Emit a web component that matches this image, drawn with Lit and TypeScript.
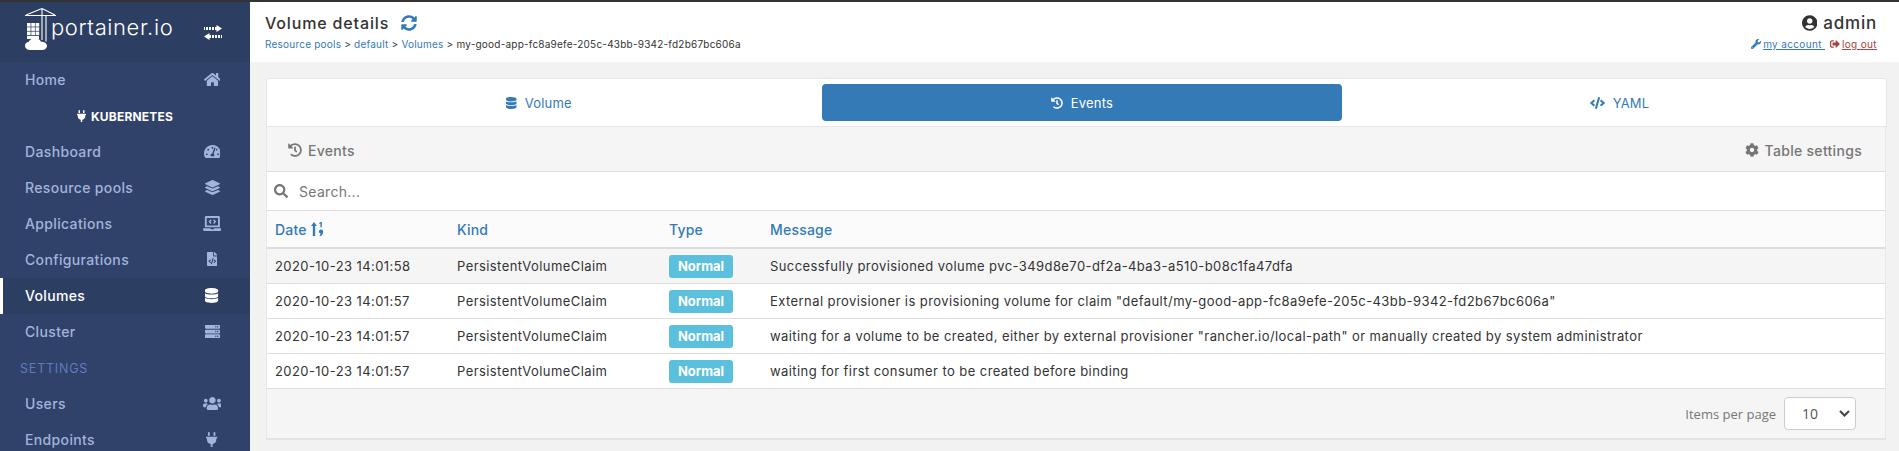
import {LitElement, css, html, svg} from 'lit';
import {customElement} from 'lit/decorators.js';

// font awesome solid glyphs: [viewBox width, path]
const ICONS: Record<string, [number, string]> = {
  home: [576, 'M280.37 148.26L96 300.11V464a16 16 0 0 0 16 16l112.06-.29a16 16 0 0 0 15.92-16V368a16 16 0 0 1 16-16h64a16 16 0 0 1 16 16v95.64a16 16 0 0 0 16 16.05L464 480a16 16 0 0 0 16-16V300L295.67 148.26a12.19 12.19 0 0 0-15.3 0zM571.6 251.47L488 182.56V44.05a12 12 0 0 0-12-12h-56a12 12 0 0 0-12 12v72.61L318.47 43a48 48 0 0 0-61 0L4.34 251.47a12 12 0 0 0-1.6 16.9l25.5 31A12 12 0 0 0 45.15 301l235.22-193.74a12.19 12.19 0 0 1 15.3 0L530.9 301a12 12 0 0 0 16.9-1.6l25.5-31a12 12 0 0 0-1.7-16.93z'],
  database: [448, 'M448 73.143v45.714C448 159.143 347.667 192 224 192S0 159.143 0 118.857V73.143C0 32.857 100.333 0 224 0s224 32.857 224 73.143zM448 176v102.857C448 319.143 347.667 352 224 352S0 319.143 0 278.857V176c48.125 33.143 136.208 48.572 224 48.572S399.874 209.143 448 176zm0 160v102.857C448 479.143 347.667 512 224 512S0 479.143 0 438.857V336c48.125 33.143 136.208 48.572 224 48.572S399.874 369.143 448 336z'],
  code: [640, 'M278.9 511.5l-61-17.7c-6.4-1.8-10-8.5-8.2-14.9L346.2 8.7c1.8-6.4 8.5-10.1 14.9-8.2l61 17.7c6.4 1.8 10 8.5 8.2 14.9L293.8 503.3c-1.9 6.4-8.5 10.1-14.9 8.2zm-114-112.2l43.5-46.4c4.6-4.9 4.3-12.7-.8-17.2L117 256l90.6-79.7c5.1-4.5 5.5-12.3.8-17.2l-43.5-46.4c-4.5-4.8-12.1-5.1-17-.5L3.8 247.2c-5.1 4.7-5.1 12.8 0 17.5l144.1 135.1c4.9 4.6 12.5 4.4 17-.5zm327.2.6l144.1-135.1c5.1-4.7 5.1-12.8 0-17.5L492.1 112.1c-4.8-4.5-12.4-4.3-17 .5L431.6 159c-4.6 4.9-4.3 12.7.8 17.2L523 256l-90.6 79.7c-5.1 4.5-5.5 12.3-.8 17.2l43.5 46.4c4.5 4.9 12.1 5.1 17 .6z'],
  search: [512, 'M505 442.7L405.3 343c-4.5-4.5-10.6-7-17-7H372c27.6-35.3 44-79.7 44-128C416 93.1 322.9 0 208 0S0 93.1 0 208s93.1 208 208 208c48.3 0 92.7-16.4 128-44v16.3c0 6.4 2.5 12.5 7 17l99.7 99.7c9.4 9.4 24.6 9.4 33.9 0l28.3-28.3c9.4-9.4 9.4-24.6.1-34zM208 336c-70.7 0-128-57.2-128-128 0-70.7 57.2-128 128-128 70.7 0 128 57.2 128 128 0 70.7-57.2 128-128 128z'],
  cog: [512, 'M487.4 315.7l-42.6-24.6c4.3-23.2 4.3-47 0-70.2l42.6-24.6c4.9-2.8 7.1-8.6 5.5-14-11.1-35.6-30-67.8-54.7-94.6-3.8-4.1-10-5.1-14.8-2.3L380.8 110c-17.9-15.4-38.5-27.3-60.8-35.1V25.8c0-5.6-3.9-10.5-9.4-11.7-36.7-8.2-74.3-7.8-109.2 0-5.5 1.2-9.4 6.1-9.4 11.7V75c-22.2 7.9-42.8 19.8-60.8 35.1L88.7 85.5c-4.9-2.8-11-1.9-14.8 2.3-24.7 26.7-43.6 58.9-54.7 94.6-1.7 5.4.6 11.2 5.5 14L67.3 221c-4.3 23.2-4.3 47 0 70.2l-42.6 24.6c-4.9 2.8-7.1 8.6-5.5 14 11.1 35.6 30 67.8 54.7 94.6 3.8 4.1 10 5.1 14.8 2.3l42.6-24.6c17.9 15.4 38.5 27.3 60.8 35.1v49.2c0 5.6 3.9 10.5 9.4 11.7 36.7 8.2 74.3 7.8 109.2 0 5.5-1.2 9.4-6.1 9.4-11.7v-49.2c22.2-7.9 42.8-19.8 60.8-35.1l42.6 24.6c4.9 2.8 11 1.9 14.8-2.3 24.7-26.7 43.6-58.9 54.7-94.6 1.5-5.5-.7-11.3-5.6-14.1zM256 336c-44.1 0-80-35.9-80-80s35.9-80 80-80 80 35.9 80 80-35.9 80-80 80z'],
  sync: [512, 'M370.72 133.28C339.458 104.008 298.888 87.962 255.848 88c-77.458.068-144.328 53.178-162.791 126.85-1.344 5.363-6.122 9.15-11.651 9.15H24.103c-7.498 0-13.194-6.807-11.807-14.176C33.933 94.924 134.813 8 256 8c66.448 0 126.791 26.136 171.315 68.685L463.03 40.97C478.149 25.851 504 36.559 504 57.941V192c0 13.255-10.745 24-24 24H345.941c-21.382 0-32.09-25.851-16.971-40.971l41.75-41.749zM32 296h134.059c21.382 0 32.09 25.851 16.971 40.971l-41.75 41.75c31.262 29.273 71.835 45.319 114.876 45.28 77.418-.07 144.315-53.144 162.787-126.849 1.344-5.363 6.122-9.15 11.651-9.15h57.304c7.498 0 13.194 6.807 11.807 14.176C478.067 417.076 377.187 504 256 504c-66.448 0-126.791-26.136-171.315-68.685L48.97 471.03C33.851 486.149 8 475.441 8 454.059V320c0-13.255 10.745-24 24-24z'],
  history: [512, 'M504 255.531c.253 136.64-111.18 248.372-247.82 248.468-59.015.042-113.223-20.53-155.822-54.911-11.077-8.94-11.905-25.541-1.839-35.607l11.267-11.267c8.609-8.609 22.353-9.551 31.891-1.984C173.062 425.135 212.781 440 256 440c101.705 0 184-82.311 184-184 0-101.705-82.311-184-184-184-48.814 0-93.149 18.969-126.068 49.932l50.754 50.754c10.08 10.08 2.941 27.314-11.313 27.314H24c-8.837 0-16-7.163-16-16V38.627c0-14.254 17.234-21.393 27.314-11.314l49.372 49.372C129.209 34.136 189.552 8 256 8c136.81 0 247.747 110.78 248 247.531zm-180.912 78.784l9.823-12.63c8.138-10.463 6.253-25.542-4.21-33.679L288 256.349V152c0-13.255-10.745-24-24-24h-16c-13.255 0-24 10.745-24 24v135.651l65.409 50.874c10.463 8.137 25.541 6.253 33.679-4.21z'],
  user: [496, 'M248 8C111 8 0 119 0 256s111 248 248 248 248-111 248-248S385 8 248 8zm0 96c48.6 0 88 39.4 88 88s-39.4 88-88 88-88-39.4-88-88 39.4-88 88-88zm0 344c-58.7 0-111.3-26.6-146.5-68.2 18.8-35.4 55.6-59.8 98.5-59.8 2.4 0 4.8.4 7.1 1.1 13 4.2 26.6 6.9 40.9 6.9 14.3 0 28-2.7 40.9-6.9 2.3-.7 4.7-1.1 7.1-1.1 42.9 0 79.7 24.4 98.5 59.8C359.3 421.4 306.7 448 248 448z'],
  wrench: [512, 'M507.73 109.1c-2.24-9.03-13.54-12.09-20.12-5.51l-74.36 74.36-67.88-11.31-11.31-67.88 74.36-74.36c6.62-6.62 3.43-17.9-5.66-20.16-47.38-11.74-99.55.91-136.58 37.93-39.64 39.64-50.55 97.1-34.05 147.2L18.74 402.76c-24.99 24.99-24.99 65.51 0 90.5 24.99 24.99 65.51 24.99 90.5 0l213.21-213.21c50.12 16.71 107.47 5.68 147.37-34.22 37.07-37.07 49.7-89.32 37.91-136.73zM64 472c-13.25 0-24-10.75-24-24 0-13.26 10.75-24 24-24s24 10.74 24 24c0 13.25-10.75 24-24 24z'],
  signout: [512, 'M497 273L329 441c-15 15-41 4.5-41-17v-96H152c-13.3 0-24-10.7-24-24v-96c0-13.3 10.7-24 24-24h136V88c0-21.4 25.9-32 41-17l168 168c9.3 9.4 9.3 24.6 0 34zM192 436v-40c0-6.6-5.4-12-12-12H96c-17.7 0-32-14.3-32-32V160c0-17.7 14.3-32 32-32h84c6.6 0 12-5.4 12-12V76c0-6.6-5.4-12-12-12H96c-53 0-96 43-96 96v192c0 53 43 96 96 96h84c6.6 0 12-5.4 12-12z'],
  plug: [384, 'M320,32a32,32,0,0,0-64,0v96h64Zm48,128H16A16,16,0,0,0,0,176v32a16,16,0,0,0,16,16H32v32A160.07,160.07,0,0,0,160,412.8V512h64V412.8A160.07,160.07,0,0,0,352,256V224h16a16,16,0,0,0,16-16V176A16,16,0,0,0,368,160ZM128,32a32,32,0,0,0-64,0v96h64Z'],
  gauge: [576, 'M288 32C128.94 32 0 160.94 0 320c0 52.8 14.25 102.26 39.06 144.8 5.61 9.62 16.3 15.2 27.44 15.2h443c11.14 0 21.83-5.58 27.44-15.2C561.75 422.26 576 372.8 576 320c0-159.06-128.94-288-288-288zm0 64c14.71 0 26.58 10.13 30.32 23.65-1.11 2.26-2.64 4.23-3.45 6.67l-9.22 27.67c-5.13 3.49-10.97 6.01-17.64 6.01-17.67 0-32-14.33-32-32S270.33 96 288 96zM96 384c-17.67 0-32-14.33-32-32s14.33-32 32-32 32 14.33 32 32-14.33 32-32 32zm48-160c-17.67 0-32-14.33-32-32s14.33-32 32-32 32 14.33 32 32-14.33 32-32 32zm246.77-72.41l-61.33 184C343.13 347.33 352 364.54 352 384c0 11.72-3.38 22.55-8.88 32H232.88c-5.5-9.45-8.88-20.28-8.88-32 0-33.94 26.5-61.43 59.9-63.59l61.34-184.01c4.17-12.56 17.73-19.45 30.36-15.17 12.57 4.19 19.35 17.79 15.17 30.36zm14.66 57.2l15.52-46.55c3.47-1.29 7.13-2.23 11.05-2.23 17.67 0 32 14.33 32 32s-14.33 32-32 32c-11.38-.01-20.89-6.28-26.57-15.22zM480 384c-17.67 0-32-14.33-32-32s14.33-32 32-32 32 14.33 32 32-14.33 32-32 32z'],
  layers: [512, 'M12.41 148.02l232.94 105.67c6.8 3.09 14.49 3.09 21.29 0l232.94-105.67c16.55-7.51 16.55-32.52 0-40.03L266.65 2.31a25.607 25.607 0 0 0-21.29 0L12.41 107.98c-16.55 7.51-16.55 32.53 0 40.04zm487.18 88.28l-58.09-26.33-161.64 73.27c-7.56 3.43-15.59 5.17-23.86 5.17s-16.29-1.74-23.86-5.17L70.51 209.97l-58.1 26.33c-16.55 7.5-16.55 32.5 0 40l232.94 105.59c6.8 3.08 14.49 3.08 21.29 0L499.59 276.3c16.55-7.5 16.55-32.5 0-40zm0 127.8l-57.87-26.23-161.86 73.37c-7.56 3.43-15.59 5.17-23.86 5.17s-16.29-1.74-23.86-5.17L70.29 337.87 12.41 364.1c-16.55 7.5-16.55 32.5 0 40l232.94 105.59c6.8 3.08 14.49 3.08 21.29 0L499.59 404.1c16.55-7.5 16.55-32.5 0-40z'],
  users: [640, 'M96 224c35.3 0 64-28.7 64-64s-28.7-64-64-64-64 28.7-64 64 28.7 64 64 64zm448 0c35.3 0 64-28.7 64-64s-28.7-64-64-64-64 28.7-64 64 28.7 64 64 64zm32 32h-64c-17.6 0-33.5 7.1-45.1 18.6 40.3 22.1 68.9 62 75.1 109.4h66c17.7 0 32-14.3 32-32v-32c0-35.3-28.7-64-64-64zm-256 0c61.9 0 112-50.1 112-112S381.9 32 320 32 208 82.1 208 144s50.1 112 112 112zm76.8 32h-8.3c-20.8 10-43.9 16-68.5 16s-47.6-6-68.5-16h-8.3C179.6 288 128 339.6 128 403.2V432c0 26.5 21.5 48 48 48h288c26.5 0 48-21.5 48-48v-28.8c0-63.6-51.6-115.2-115.2-115.2zm-223.7-13.4C161.5 263.1 145.6 256 128 256H64c-35.3 0-64 28.7-64 64v32c0 17.7 14.3 32 32 32h65.9c6.3-47.4 34.9-87.3 75.2-109.4z'],
  server: [512, 'M480 160H32c-17.673 0-32-14.327-32-32V64c0-17.673 14.327-32 32-32h448c17.673 0 32 14.327 32 32v64c0 17.673-14.327 32-32 32zm-48-88c-13.255 0-24 10.745-24 24s10.745 24 24 24 24-10.745 24-24-10.745-24-24-24zm-64 0c-13.255 0-24 10.745-24 24s10.745 24 24 24 24-10.745 24-24-10.745-24-24-24zm112 248H32c-17.673 0-32-14.327-32-32v-64c0-17.673 14.327-32 32-32h448c17.673 0 32 14.327 32 32v64c0 17.673-14.327 32-32 32zm-48-88c-13.255 0-24 10.745-24 24s10.745 24 24 24 24-10.745 24-24-10.745-24-24-24zm-64 0c-13.255 0-24 10.745-24 24s10.745 24 24 24 24-10.745 24-24-10.745-24-24-24zm112 248H32c-17.673 0-32-14.327-32-32v-64c0-17.673 14.327-32 32-32h448c17.673 0 32 14.327 32 32v64c0 17.673-14.327 32-32 32zm-48-88c-13.255 0-24 10.745-24 24s10.745 24 24 24 24-10.745 24-24-10.745-24-24-24zm-64 0c-13.255 0-24 10.745-24 24s10.745 24 24 24 24-10.745 24-24-10.745-24-24-24z'],
  file: [384, 'M384 121.941V128H256V0h6.059c6.365 0 12.47 2.529 16.971 7.029l97.941 97.941A24.005 24.005 0 0 1 384 121.941zM248 160c-13.2 0-24-10.8-24-24V0H24C10.745 0 0 10.745 0 24v464c0 13.255 10.745 24 24 24h336c13.255 0 24-10.745 24-24V160H248zM123.206 400.505a5.4 5.4 0 0 1-7.633.246l-64.866-60.812a5.4 5.4 0 0 1 0-7.879l64.866-60.812a5.4 5.4 0 0 1 7.633.246l19.579 20.885a5.4 5.4 0 0 1-.372 7.747L101.65 336l40.763 35.874a5.4 5.4 0 0 1 .372 7.747l-19.579 20.884zm51.295 50.479l-27.453-7.97a5.402 5.402 0 0 1-3.681-6.692l61.44-211.626a5.402 5.402 0 0 1 6.692-3.681l27.452 7.97a5.4 5.4 0 0 1 3.68 6.692l-61.44 211.626a5.397 5.397 0 0 1-6.69 3.681zm160.792-111.045l-64.866 60.812a5.4 5.4 0 0 1-7.633-.246l-19.58-20.885a5.4 5.4 0 0 1 .372-7.747L284.35 336l-40.763-35.874a5.4 5.4 0 0 1-.372-7.747l19.58-20.885a5.4 5.4 0 0 1 7.633-.246l64.866 60.812a5.4 5.4 0 0 1-.001 7.879z'],
  laptop: [640, 'M255.03 261.65c6.25 6.25 16.38 6.25 22.63 0l11.31-11.31c6.25-6.25 6.25-16.38 0-22.63L253.25 192l35.71-35.72c6.25-6.25 6.25-16.38 0-22.63l-11.31-11.31c-6.25-6.25-16.38-6.25-22.63 0l-58.34 58.34c-6.25 6.25-6.25 16.38 0 22.63l58.35 58.34zm96.01-11.3l11.31 11.31c6.25 6.25 16.38 6.25 22.63 0l58.34-58.34c6.25-6.25 6.25-16.38 0-22.63l-58.34-58.34c-6.25-6.25-16.38-6.25-22.63 0l-11.31 11.31c-6.25 6.25-6.25 16.38 0 22.63L386.75 192l-35.71 35.72c-6.25 6.25-6.25 16.38 0 22.63zM624 416H381.54c-.74 19.81-14.71 32-32.74 32H288c-18.69 0-33.02-17.47-32.77-32H16c-8.8 0-16 7.2-16 16v16c0 35.2 28.8 64 64 64h512c35.2 0 64-28.8 64-64v-16c0-8.8-7.2-16-16-16zM576 48c0-26.4-21.6-48-48-48H112C85.6 0 64 21.6 64 48v336h512V48zm-64 272H128V64h384v256z'],
};

const icon = (name: string, size: number) => {
  const [w, d] = ICONS[name];
  return html`<svg class="ic" width=${(size * w) / 512} height=${size} viewBox="0 0 ${w} 512" fill="currentColor"><path d=${d}></path></svg>`;
};

// crane over a stack of containers and a cloud
const logo = html`<svg class="logo" width="31" height="42" viewBox="0 0 31 42" fill="none" stroke="#fff">
  <path d="M0 7.500h31M1 7l16-6.500L30 7M17 0v32M21 7.500v26" stroke-width="1.100"></path>
  ${[0, 4.300, 8.600].map((x) => [15, 19.300, 23.600].map((y) => svg`<rect x=${2 + x} y=${y} width="3.600" height="3.600" fill="#fff" stroke="none"></rect>`))}
  <path d="M2 28h12v3H2z" fill="#fff" stroke="none"></path>
  <path d="M5 42c-3 0-5-1.600-5-4.200 0-2.200 1.500-3.600 3.500-3.800C4.500 31.600 7 30.500 10 30.500c3 0 5 1.200 6 3.200 3-.3 6 1.300 6 4.100 0 2.600-2 4.200-5 4.200z" fill="#fff" stroke="none"></path>
</svg>`;

const exchange = html`<svg class="ic" width="18" height="15" viewBox="0 0 18 15" fill="#fff">
  <path d="M12.500 0L18 3.500l-5.500 3.500V5H11V2h1.500zM10 2v3H8V2zM7 2v3H5V2zM4 2v3H2V2zM1 2v3H0V2z"></path>
  <path d="M5.500 8L0 11.500 5.500 15v-2H7v-3H5.500zM8 10v3h2v-3zM11 10v3h2v-3zM14 10v3h2v-3zM17 10v3h1v-3z"></path>
</svg>`;

const sortIcon = html`<svg class="ic" width="13" height="14" viewBox="0 0 11 12" fill="currentColor">
  <path d="M2.500 0L5 3.500H3.500V12h-2V3.500H0zM8 0h1.200v4.500H8V1.300L7 1.800V.8zM8.500 6.500a1.800 1.800 0 0 1 1.800 1.900c0 1.600-.9 3.600-2.200 3.600H7.200l1-2.100a1.700 1.700 0 0 1-1.500-1.600c0-1 .8-1.800 1.800-1.800z"></path>
</svg>`;

const NAV_TOP = [
  {label: 'Dashboard', icon: 'gauge', size: 15},
  {label: 'Resource pools', icon: 'layers', size: 15},
  {label: 'Applications', icon: 'laptop', size: 15},
  {label: 'Configurations', icon: 'file', size: 14},
  {label: 'Volumes', icon: 'database', size: 15, active: true},
  {label: 'Cluster', icon: 'server', size: 15},
];

const EVENTS = [
  ['2020-10-23 14:01:58', 'Successfully provisioned volume pvc-349d8e70-df2a-4ba3-a510-b08c1fa47dfa'],
  ['2020-10-23 14:01:57', 'External provisioner is provisioning volume for claim "default/my-good-app-fc8a9efe-205c-43bb-9342-fd2b67bc606a"'],
  ['2020-10-23 14:01:57', 'waiting for a volume to be created, either by external provisioner "rancher.io/local-path" or manually created by system administrator'],
  ['2020-10-23 14:01:57', 'waiting for first consumer to be created before binding'],
];

@customElement('app-root')
export class AppRoot extends LitElement {
  static override styles = css`
    :host {
      display: block;
      height: 100vh;
      overflow: hidden;
      font-family: Inter, 'Liberation Sans', sans-serif;
      font-size: 13px;
      color: #333;
      background: #f2f2f2;
    }
    .topline {
      height: 2px;
      background: #333;
    }
    .page {
      display: flex;
      height: 449px;
    }
    .ic {
      display: block;
      flex: none;
    }

    .sidebar {
      width: 250px;
      flex: none;
      background: #30426a;
      color: #a3b4da;
      font-weight: 500;
      font-size: 14px;
      letter-spacing: 0.35px;
    }
    .brand {
      height: 60px;
      box-sizing: border-box;
      background: #2d3e63;
      display: flex;
      align-items: flex-start;
      padding: 6px 0 0 25px;
      color: #fff;
    }
    .logo {
      margin-right: -5px;
    }
    .wordmark {
      font-size: 22px;
      line-height: 28px;
      font-weight: 300;
      letter-spacing: 0.6px;
      margin-top: 5px;
    }
    .swap {
      margin-left: auto;
      margin-right: 28px;
      margin-top: 17px;
    }
    .item {
      height: 36px;
      box-sizing: border-box;
      display: flex;
      align-items: center;
      justify-content: space-between;
      padding: 0 25px 2px 25px;
    }
    .item .slot {
      width: 26px;
      display: flex;
      justify-content: center;
    }
    .item.active {
      background: #2d3e63;
      color: #fff;
      box-shadow: inset 3px 0 0 #fff;
    }
    .env {
      height: 36px;
      display: flex;
      align-items: center;
      justify-content: center;
      gap: 5px;
      color: #fff;
      font-size: 12px;
      font-weight: 700;
      letter-spacing: 0.2px;
    }
    .section {
      height: 36px;
      display: flex;
      align-items: center;
      padding-left: 20px;
      color: #5f7cbd;
      font-size: 12.500px;
      font-weight: 400;
      letter-spacing: 0.8px;
    }

    .main {
      flex: 1;
      min-width: 0;
    }
    .header {
      height: 60px;
      background: #fff;
      display: flex;
      justify-content: space-between;
      padding: 12px 22px 0 15px;
      box-sizing: border-box;
    }
    .title {
      display: flex;
      align-items: center;
      gap: 12px;
      height: 18px;
      font-size: 16px;
      font-weight: 500;
      letter-spacing: 0.85px;
    }
    .title .ic {
      color: #337ab7;
    }
    .crumbs {
      margin-top: 6px;
      font-size: 10px;
      line-height: 12px;
      letter-spacing: 0.22px;
    }
    .crumbs a {
      color: #337ab7;
    }
    .account {
      display: flex;
      flex-direction: column;
      align-items: flex-end;
    }
    .who {
      display: flex;
      align-items: center;
      gap: 6px;
      height: 18px;
      font-size: 17px;
      font-weight: 500;
      letter-spacing: 0.8px;
    }
    .links {
      display: flex;
      gap: 5px;
      margin-top: 6px;
      font-size: 10px;
      line-height: 12px;
      letter-spacing: 0.35px;
    }
    .links a {
      display: flex;
      align-items: center;
      color: #337ab7;
    }
    .links a.out {
      color: #a94442;
    }
    .links span {
      text-decoration: underline;
      margin-left: 2px;
    }

    .content {
      padding: 16px 12px 0 16px;
    }
    .tabs {
      display: grid;
      grid-template-columns: 544px 520px 1fr;
      column-gap: 11px;
      height: 49px;
      box-sizing: border-box;
      padding: 5px 0;
      background: #fff;
      border: 1px solid #e7e7e7;
      border-radius: 3px 3px 0 0;
      font-size: 13px;
      letter-spacing: 0.2px;
      color: #337ab7;
    }
    .tab {
      display: flex;
      align-items: center;
      justify-content: center;
      gap: 8px;
      border-radius: 4px;
    }
    .tab.current {
      background: #337ab7;
      color: #fff;
    }

    .widget {
      width: 1620px;
      border-left: 1px solid #e7e7e7;
      border-right: 1px solid #e7e7e7;
      border-bottom: 2px solid #e3e3e3;
      background: #f5f5f5;
      box-sizing: border-box;
    }
    .toolbar {
      height: 45px;
      display: flex;
      align-items: center;
      justify-content: space-between;
      padding: 2px 23px 0 21px;
      color: #767676;
      font-size: 14px;
      font-weight: 500;
      letter-spacing: 0.3px;
      border-bottom: 1px solid #ddd;
      box-sizing: border-box;
    }
    .toolbar > div {
      display: flex;
      align-items: center;
      gap: 6px;
    }
    .search {
      height: 39px;
      box-sizing: border-box;
      display: flex;
      align-items: center;
      gap: 11px;
      padding-left: 7px;
      background: #fff;
      color: #767676;
      font-size: 14px;
      letter-spacing: 0.3px;
      border-bottom: 1px solid #ddd;
    }
    .row {
      display: grid;
      grid-template-columns: 182px 212px 101px 1fr;
      align-items: center;
      padding-left: 8px;
      box-sizing: border-box;
      background: #fff;
      border-bottom: 1px solid #ddd;
      height: 35px;
      letter-spacing: 0.42px;
    }
    .row.head {
      height: 38px;
      background: #fbfbfb;
      color: #337ab7;
      font-size: 14px;
      font-weight: 500;
      letter-spacing: 0.2px;
      border-bottom: 2px solid #ddd;
    }
    .row.hover {
      background: #f5f5f5;
    }
    .row:last-of-type {
      border-bottom: none;
    }
    .date {
      display: flex;
      align-items: center;
      gap: 4px;
    }
    .badge {
      width: 64px;
      height: 23px;
      border-radius: 3px;
      background: #5bc0de;
      color: #fff;
      font-size: 13px;
      font-weight: 700;
      letter-spacing: 0;
      display: flex;
      align-items: center;
      justify-content: center;
    }
    .footer {
      height: 49px;
      display: flex;
      align-items: center;
      justify-content: flex-end;
      gap: 8px;
      padding-right: 29px;
      color: #777;
      font-family: 'Open Sans', sans-serif;
      font-size: 13px;
    }
    .select {
      width: 72px;
      height: 33px;
      box-sizing: border-box;
      display: flex;
      align-items: center;
      justify-content: space-between;
      padding: 0 5px 0 17px;
      background: #fff;
      border: 1px solid #ccc;
      border-radius: 4px;
      color: #555;
      font-size: 14px;
    }
  `;

  override render() {
    return html`
      <div class="topline"></div>
      <div class="page">
        <nav class="sidebar">
          <div class="brand">${logo}<span class="wordmark">portainer.io</span><span class="swap">${exchange}</span></div>
          ${this.renderItem('Home', 'home', 15)}
          <div class="env">${icon('plug', 12)}KUBERNETES</div>
          ${NAV_TOP.map((n) => this.renderItem(n.label, n.icon, n.size, n.active))}
          <div class="section">SETTINGS</div>
          ${this.renderItem('Users', 'users', 15)}
          ${this.renderItem('Endpoints', 'plug', 15)}
        </nav>
        <div class="main">
          <header class="header">
            <div>
              <div class="title">Volume details ${icon('sync', 16)}</div>
              <div class="crumbs"><a>Resource pools</a> &gt; <a>default</a> &gt; <a>Volumes</a> &gt; my-good-app-fc8a9efe-205c-43bb-9342-fd2b67bc606a</div>
            </div>
            <div class="account">
              <div class="who">${icon('user', 16)} admin</div>
              <div class="links">
                <a>${icon('wrench', 10)}<span>my account&nbsp;</span></a>
                <a class="out">${icon('signout', 10)}<span>log out</span></a>
              </div>
            </div>
          </header>
          <div class="content">
            <div class="tabs">
              <div class="tab">${icon('database', 12)} Volume</div>
              <div class="tab current">${icon('history', 12)} Events</div>
              <div class="tab">${icon('code', 12)} YAML</div>
            </div>
            <div class="widget">
              <div class="toolbar">
                <div>${icon('history', 14)} Events</div>
                <div>${icon('cog', 14)} Table settings</div>
              </div>
              <div class="search">${icon('search', 14)} Search...</div>
              <div class="row head">
                <div class="date">Date ${sortIcon}</div>
                <div>Kind</div>
                <div>Type</div>
                <div>Message</div>
              </div>
              ${EVENTS.map(
                ([date, msg], i) => html`<div class="row ${i === 0 ? 'hover' : ''}">
                  <div>${date}</div>
                  <div>PersistentVolumeClaim</div>
                  <div><span class="badge">Normal</span></div>
                  <div>${msg}</div>
                </div>`
              )}
              <div class="footer">
                Items per page
                <div class="select">
                  10
                  <svg width="11" height="7" viewBox="0 0 11 7" fill="none" stroke="#444" stroke-width="2"><path d="M1 1l4.500 4.500L10 1"></path></svg>
                </div>
              </div>
            </div>
          </div>
        </div>
      </div>
    `;
  }

  private renderItem(label: string, name: string, size: number, active = false) {
    return html`<div class="item ${active ? 'active' : ''}">${label}<span class="slot">${icon(name, size)}</span></div>`;
  }
}

declare global {
  interface HTMLElementTagNameMap {
    'app-root': AppRoot;
  }
}
